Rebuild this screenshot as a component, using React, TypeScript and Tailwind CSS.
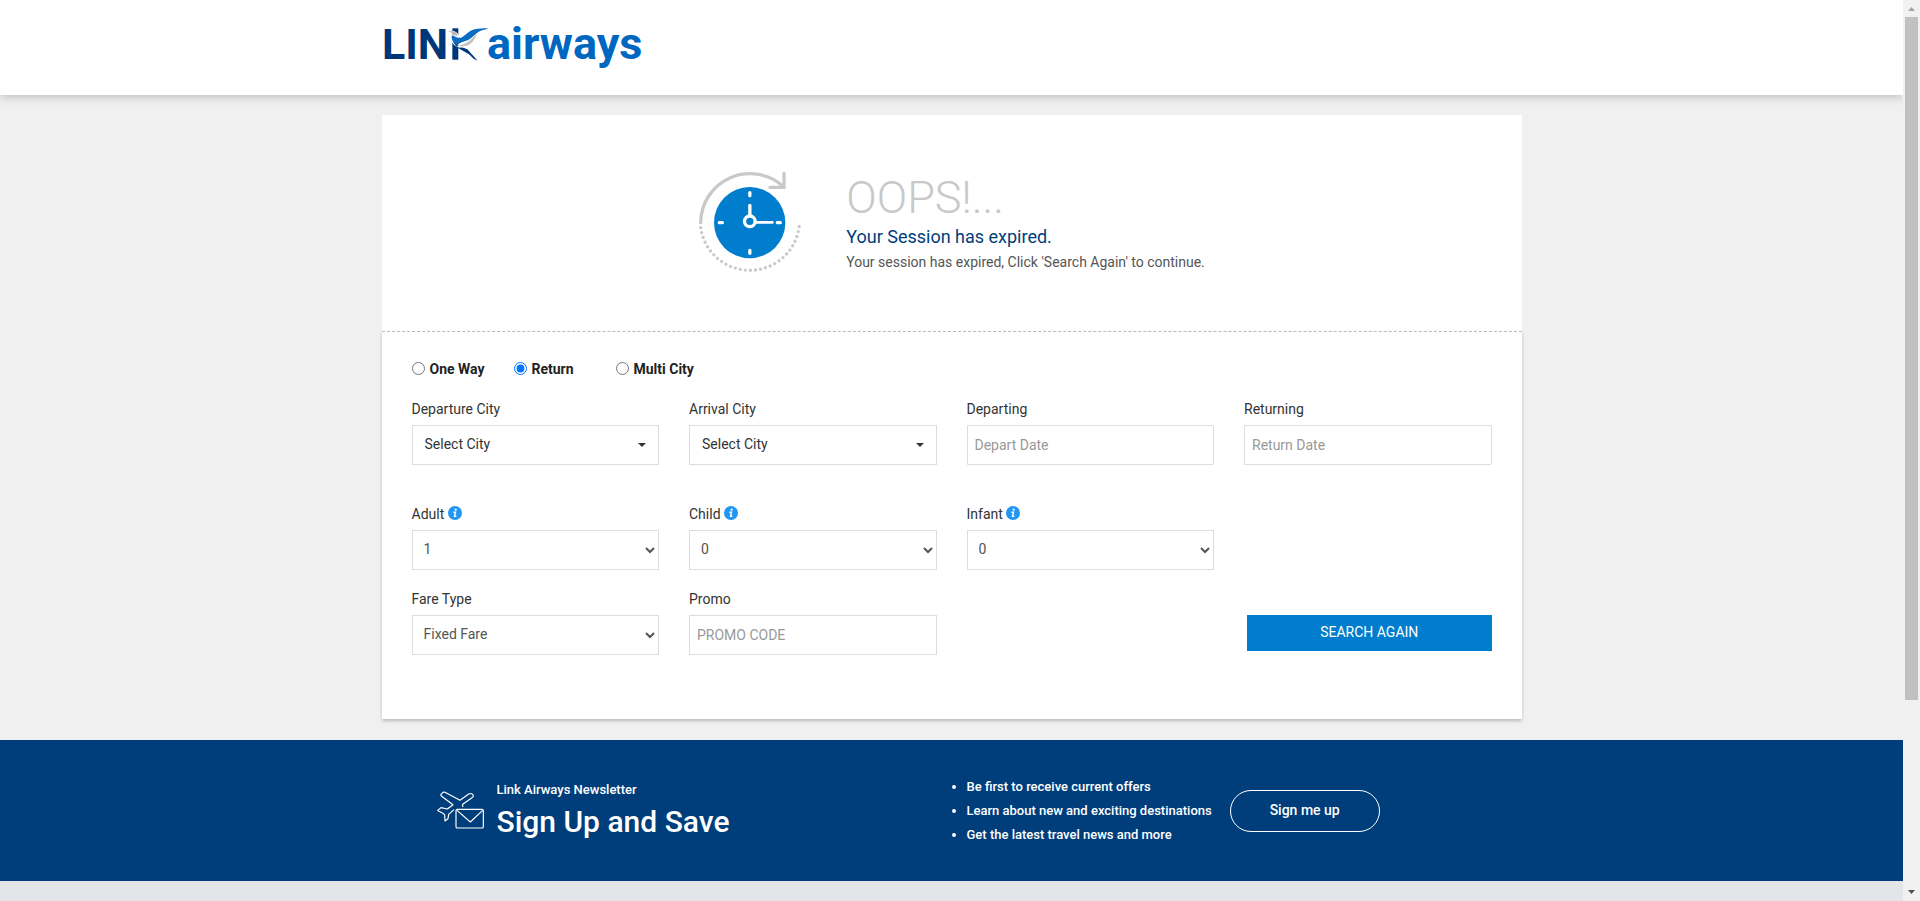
import type { ReactNode } from "react";

const control =
  "h-10 w-full border border-[#ddd] bg-white text-sm focus:outline-none focus:border-[#007dcc]";

function Logo() {
  return (
    <svg viewBox="-2 -6 274 64" className="h-16 w-[274px]" role="img" aria-label="Link Airways">
      <g fontFamily="Roboto, sans-serif" fontWeight="700">
        <text x="0" y="40" fontSize="43" fill="#003778">LIN</text>
        <text x="105" y="40" fontSize="45" fill="#0067c0">airways</text>
      </g>
      <g transform="translate(-12 -19) scale(0.3333)">
        <path d="M247 85h18v94h-18z" fill="#003778" />
        <path d="M266 138l26 10 31 34-12-6-14-13-34-20z" fill="#003778" />
        <path d="M232 90l20 3 10 6 8 14c14-4 24-18 40-28l44-4-20 16c-20 30-34 44-66 46l-16-8-10-14 1-16z" fill="#fff" />
        <path d="M233 92l17 2c6 0 10 3 11 8l2 7-8-3-8 1-2-9z" fill="#bdb8b2" />
        <path d="M245 107c10-1 14 9 27 6 14-4 22-20 42-25 12-3 26-3 40-3-6 5-15 4-24 8-12 6-22 20-34 26-14 7-24 6-34 16-10-5-18-14-17-28z" fill="#0b6cc4" />
        <path d="M249 125c4 8 8 11 13 14l4-4c-7-2-12-5-17-10z" fill="#003778" />
        <path d="M264 137c22-3 42-16 58-40-6 24-20 40-40 42-7 1-13 0-18-2z" fill="#c6c3be" />
      </g>
    </svg>
  );
}

function SessionClock() {
  return (
    <svg viewBox="54 63 312 315" className="h-[105px] w-[104px] shrink-0" fill="none" aria-hidden="true">
      <circle cx="209" cy="218" r="107" fill="#007dcc" />
      <g stroke="#c9c9c9" strokeWidth="10" strokeLinecap="round">
        <path d="M62 218A148 148 0 0 1 308 108" />
        <path d="M312 70v42h-42" strokeLinejoin="miter" />
        <path d="M62 233A149 149 0 0 0 358 224" strokeDasharray="0 15.3" />
      </g>
      <g stroke="#fff" strokeWidth="10" strokeLinecap="round">
        <path d="M209.500 128v9M209.500 301v9M118 218h9M292 218h9" />
        <path d="M209.500 166v30" />
        <path d="M228 217h49" strokeWidth="8" />
        <circle cx="209.500" cy="214" r="16" />
      </g>
    </svg>
  );
}

function InfoIcon() {
  return (
    <svg viewBox="0 0 14 14" className="mb-[5px] inline size-3.5" aria-hidden="true">
      <circle cx="7" cy="7" r="7" fill="#2196f3" />
      <circle cx="7.700" cy="3.700" r="1.100" fill="#fff" />
      <path d="M5.300 6.200h2.200L6.500 10.300h1.800" fill="none" stroke="#fff" strokeWidth="1.400" />
    </svg>
  );
}

function NewsletterIcon() {
  return (
    <svg
      viewBox="50 98 141 114"
      className="h-[38px] w-[47px] shrink-0 overflow-visible"
      fill="none"
      stroke="#fff"
      strokeWidth="3.500"
      strokeLinejoin="round"
      aria-hidden="true"
    >
      <path d="M127 140v-8l28-20q7-6 2-10-6-5-13 0l-25 18-45-24q-4-2-7 1l-5 5q-2 3 1 5l35 26-17 13-19-4-10 8q1 2 4 3l14 7q4 2 3 7l1 15 9-7 2-13 16-14" />
      <rect x="107" y="147" width="82" height="56" rx="4" />
      <path d="M110 150l40 35 37-35" />
    </svg>
  );
}

function Field({ id, label, info, children }: { id: string; label: string; info?: boolean; children: ReactNode }) {
  return (
    <div>
      <label htmlFor={id} className="mb-1.5 block h-5 text-sm leading-5 text-[#333]">
        {label} {info && <InfoIcon />}
      </label>
      {children}
    </div>
  );
}

function CitySelect({ id }: { id: string }) {
  return (
    <div className="relative">
      <select id={id} className={`${control} appearance-none pb-0.5 pl-3 pr-8 text-[#333]`}>
        <option>Select City</option>
      </select>
      <svg viewBox="0 0 8 4" className="pointer-events-none absolute right-[13px] top-[18px] h-1 w-2" aria-hidden="true">
        <path d="M0 0h8L4 4z" fill="#333" />
      </svg>
    </div>
  );
}

function NumberSelect({ id, first }: { id: string; first: number }) {
  return (
    <select id={id} className={`${control} pb-0.5 pl-[7px] pr-px text-[#555]`}>
      {[0, 1, 2, 3, 4].map((n) => (
        <option key={n}>{first + n}</option>
      ))}
    </select>
  );
}

function TripOption({ label, checked }: { label: string; checked?: boolean }) {
  return (
    <label className="flex w-[102px] items-center gap-[5px] whitespace-nowrap text-sm font-bold text-[#222]">
      <input type="radio" name="trip" defaultChecked={checked} className="size-[13px]" />
      {label}
    </label>
  );
}

function ScrollRail() {
  return (
    <div className="sticky top-0 flex h-screen w-[17px] shrink-0 flex-col items-center bg-[#f1f1f1]" aria-hidden="true">
      <svg viewBox="0 0 17 17" className="size-[17px]">
        <path d="M5 11h7L8.500 7z" fill="#a3a3a3" />
      </svg>
      <div className="w-[13px] grow-[683] basis-0 bg-[#c1c1c1]" />
      <div className="grow-[184] basis-0" />
      <svg viewBox="0 0 17 17" className="size-[17px]">
        <path d="M5 6h7l-3.500 4z" fill="#505050" />
      </svg>
    </div>
  );
}

export default function App() {
  return (
    <div className="flex min-h-screen bg-[#f0f0f0] font-['Roboto',sans-serif]">
      <div className="flex min-w-0 grow flex-col overflow-x-clip">
        <header className="bg-white pb-[18px] pt-[13px] shadow-[0_1px_10px_rgba(0,0,0,0.25)]">
          <div className="mx-auto max-w-[1144px]">
            <a href="#" className="inline-block align-top">
              <Logo />
            </a>
          </div>
        </header>

        <main className="mx-auto w-full max-w-[1140px] pb-[21px] pt-5">
          <section className="flex h-[216px] items-center justify-center gap-11 bg-white">
            <SessionClock />
            <div>
              <h1 className="text-[45px] font-light leading-[50px] text-[#c8c8c8]">OOPS!...</h1>
              <h2 className="text-lg leading-7 text-[#003e7b]">Your Session has expired.</h2>
              <p className="text-sm leading-[22px] text-[#555]">
                Your session has expired, Click 'Search Again' to continue.
              </p>
            </div>
          </section>

          <form
            className="border-t border-dashed border-[#bbb] bg-white px-[30px] pb-16 pt-6 shadow-[0_2px_3px_rgba(0,0,0,0.22)]"
            onSubmit={(e) => e.preventDefault()}
          >
            <div className="flex h-[25px]" role="radiogroup" aria-label="Trip type">
              <TripOption label="One Way" />
              <TripOption label="Return" checked />
              <TripOption label="Multi City" />
            </div>

            <div className="mt-[18px] grid grid-cols-4 gap-x-[30px]">
              <Field id="from" label="Departure City">
                <CitySelect id="from" />
              </Field>
              <Field id="to" label="Arrival City">
                <CitySelect id="to" />
              </Field>
              <Field id="depart" label="Departing">
                <input id="depart" placeholder="Depart Date" className={`${control} rounded-r-xs px-[7px] placeholder:text-[#999]`} />
              </Field>
              <Field id="return" label="Returning">
                <input id="return" placeholder="Return Date" className={`${control} rounded-r-xs px-[7px] placeholder:text-[#999]`} />
              </Field>
            </div>

            <div className="mt-[39px] grid grid-cols-4 gap-x-[30px]">
              <Field id="adult" label="Adult" info>
                <NumberSelect id="adult" first={1} />
              </Field>
              <Field id="child" label="Child" info>
                <NumberSelect id="child" first={0} />
              </Field>
              <Field id="infant" label="Infant" info>
                <NumberSelect id="infant" first={0} />
              </Field>
            </div>

            <div className="mt-[19px] grid grid-cols-4 gap-x-[30px]">
              <Field id="fare" label="Fare Type">
                <select id="fare" className={`${control} pb-0.5 pl-[7px] pr-px text-[#555]`}>
                  <option>Fixed Fare</option>
                </select>
              </Field>
              <Field id="promo" label="Promo">
                <input id="promo" placeholder="PROMO CODE" className={`${control} px-[7px] placeholder:text-[#999]`} />
              </Field>
              <button
                type="submit"
                className="col-start-4 ml-[3px] mt-[26px] h-9 bg-[#007dcc] pb-0.5 text-sm text-white"
              >
                SEARCH AGAIN
              </button>
            </div>
          </form>
        </main>

        <section className="bg-[#003e7b] text-white">
          <div className="mx-auto grid h-[141px] w-full max-w-[1140px] grid-cols-2 items-center">
            <div className="flex items-center gap-[13px] pl-[55px] pt-0.5">
              <NewsletterIcon />
              <div>
                <p className="text-[13px] font-medium leading-5">Link Airways Newsletter</p>
                <h2 className="text-[30px] font-medium leading-[44px]">Sign Up and Save</h2>
              </div>
            </div>
            <div className="flex items-center gap-[18px]">
              <ul className="list-disc pl-[15px] text-[13px] font-medium leading-6">
                <li>Be first to receive current offers</li>
                <li>Learn about new and exciting destinations</li>
                <li>Get the latest travel news and more</li>
              </ul>
              <button type="button" className="h-[42px] w-[150px] rounded-full border border-white pb-0.5 text-sm font-medium">
                Sign me up
              </button>
            </div>
          </div>
        </section>
        <div className="min-h-5 grow bg-[#e4e5e9]" />
      </div>
      <ScrollRail />
    </div>
  );
}
